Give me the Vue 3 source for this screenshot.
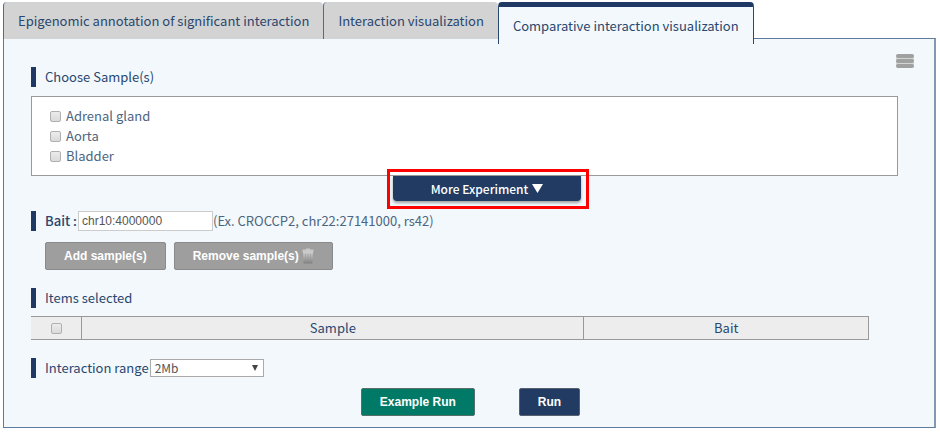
<script setup>
import { ref } from 'vue';

const tabs = [
  'Epigenomic annotation of significant interaction',
  'Interaction visualization',
  'Comparative interaction visualization',
];
const activeTab = ref(2);

const samples = ['Adrenal gland', 'Aorta', 'Bladder'];
const checked = ref([]);
const allSelected = ref(false);

const bait = ref('chr10:4000000');
const range = ref('2Mb');
const ranges = ['500Kb', '1Mb', '2Mb'];
</script>

<template>
  <main class="page">
    <nav class="tabs">
      <button
        v-for="(tab, i) in tabs"
        :key="tab"
        type="button"
        class="tab"
        :class="{ 'is-active': i === activeTab }"
        @click="activeTab = i"
      >{{ tab }}</button>
    </nav>

    <section class="panel">
      <header class="panel-head">
        <h2 class="label">Choose Sample(s)</h2>
        <button type="button" class="menu" aria-label="Menu">
          <svg width="18" height="14" viewBox="0 0 18 14">
            <rect y="1" width="18" height="12" fill="#d2d5d6" />
            <rect width="18" height="4" rx="2" fill="#a0a0a0" />
            <rect y="5" width="18" height="4" rx="2" fill="#a0a0a0" />
            <rect y="10" width="18" height="4" rx="2" fill="#a0a0a0" />
          </svg>
        </button>
      </header>

      <div class="samples">
        <label v-for="s in samples" :key="s" class="sample">
          <input v-model="checked" type="checkbox" class="check" :value="s">
          {{ s }}
        </label>
      </div>

      <div class="more-row">
        <div class="more-wrap">
          <button type="button" class="more">
            More Experiment
            <svg width="11" height="9" viewBox="0 0 11 9"><path d="M0 0h11L5.5 9z" fill="#fff" /></svg>
          </button>
        </div>
      </div>

      <div class="label bait">
        <label for="bait" class="bait-name">Bait :</label>
        <input id="bait" v-model="bait" type="text" class="bait-input">
        <span class="hint">(Ex. CROCCP2, chr22:27141000, rs42)</span>
      </div>

      <div class="actions">
        <button type="button" class="btn">Add sample(s)</button>
        <button type="button" class="btn">
          Remove sample(s)
          <!-- trash can -->
          <svg class="trash" width="12" height="16" viewBox="0 0 12 16">
            <defs>
              <linearGradient id="can" x1="0" y1="0" x2="0" y2="1">
                <stop offset="0" stop-color="#d0d0d0" />
                <stop offset="1" stop-color="#808080" />
              </linearGradient>
            </defs>
            <path d="M4 1.5V.5h4v1h3.5V4H.5V1.500z" fill="#c8c8c8" />
            <path d="M1 4h10l-.6 11.500H1.600z" fill="url(#can)" />
            <path d="M3.500 5.500l.3 8M6 5.500v8M8.500 5.500l-.3 8" stroke="#9a9a9a" stroke-width=".6" />
          </svg>
        </button>
      </div>

      <h2 class="label">Items selected</h2>
      <table class="items">
        <thead>
          <tr>
            <th class="col-check">
              <input v-model="allSelected" type="checkbox" class="check" aria-label="Select all">
            </th>
            <th class="col-sample">Sample</th>
            <th>Bait</th>
          </tr>
        </thead>
      </table>

      <div class="label">
        <label for="range">Interaction range</label>
        <span class="select">
          <select id="range" v-model="range">
            <option v-for="r in ranges" :key="r">{{ r }}</option>
          </select>
          <svg class="arrow" width="6" height="6" viewBox="0 0 6 6"><path d="M0 0h6L3 6z" fill="#444" /></svg>
        </span>
      </div>

      <div class="run-row">
        <button type="button" class="btn btn-example">Example Run</button>
        <button type="button" class="btn btn-run">Run</button>
      </div>
    </section>
  </main>
</template>

<style>
body {
  background: #fff;
}
</style>

<style scoped>
.page {
  padding: 2px 4px 7px 3px;
  font-family: "Noto Sans CJK KR", "Noto Sans", sans-serif;
  font-size: 13px;
  line-height: 20px;
  color: #29476f;
}
.page * {
  box-sizing: border-box;
}
button,
input,
select {
  margin: 0;
  font-family: inherit;
}

/* tabs: the active one hangs over the top border of the panel */
.tabs {
  position: relative;
  display: flex;
  align-items: flex-start;
  height: 36px;
}
.tab {
  height: 37px;
  padding: 0 14px;
  border: 0;
  border-left: 1px solid #4f6b91;
  border-radius: 4px 4px 0 0;
  background: #d3d3d3;
  color: #29476f;
  font-size: 13px;
  line-height: 20px;
  white-space: nowrap;
}
.tab.is-active {
  height: 42px;
  border: 1px solid #29476f;
  border-top: 5px solid #1f3864;
  border-bottom: 0;
  background: #f2f8fb;
}

.panel {
  padding: 15px 20px 11px 27px;
  border: 1px solid #5d7a9f;
  border-right: 2px solid #8398b4;
  background: #f2f8fb;
}
.panel-head {
  display: flex;
  align-items: flex-start;
  justify-content: space-between;
}
.panel-head .label {
  margin-top: 13px;
}
.menu {
  height: 14px;
  padding: 0;
  border: 0;
  background: none;
}
.menu svg {
  display: block;
}

.label {
  display: flex;
  align-items: center;
  height: 20px;
  margin: 0;
  padding-left: 9px;
  border-left: 5px solid #1f3864;
  font-size: 13px;
  font-weight: 400;
}

.samples {
  height: 80px;
  margin: 9px 16px 0 0;
  padding: 9px 18px;
  border: 1px solid #999;
  background: #fff;
}
.sample {
  display: flex;
  align-items: center;
  gap: 5px;
  color: #4d6580;
}
.check {
  appearance: none;
  width: 11px;
  height: 11px;
  border: 1px solid #b0b0b0;
  border-radius: 2px;
  background: linear-gradient(#ececec, #dadada);
}

.more-row {
  display: flex;
  justify-content: center;
  padding-left: 29px;
}
.more-wrap {
  position: relative;
}
.more-wrap::after {
  content: "";
  position: absolute;
  inset: -7px -8px -8px -6px;
  border: 3px solid #f00;
  pointer-events: none;
}
.more {
  display: flex;
  align-items: center;
  justify-content: center;
  gap: 4px;
  width: 188px;
  height: 25px;
  padding: 0;
  border: 0;
  border-radius: 0 0 4px 4px;
  background: #213b63;
  box-shadow: 0 2px 3px rgba(0, 0, 0, 0.35);
  color: #fff;
  font-size: 12px;
  font-weight: 500;
}

.bait {
  margin-top: 10px;
}
.bait-name {
  width: 33px;
  font-weight: 500;
  white-space: nowrap;
}
.bait-input {
  width: 135px;
  height: 20px;
  padding: 0 3px;
  border: 1px solid #ccc;
  background: #fff;
  color: #555;
  font-family: "Liberation Sans", Arial, sans-serif;
  font-size: 12px;
}
.hint {
  color: #4d6580;
}

.actions {
  display: flex;
  gap: 8px;
  margin: 11px 0 18px 14px;
}
.btn {
  display: flex;
  align-items: center;
  gap: 3px;
  height: 28px;
  padding: 0 18px;
  border: 1px solid #8a8a8a;
  border-radius: 2px;
  background: #9e9e9e;
  color: #fff;
  font-family: "Liberation Sans", Arial, sans-serif;
  font-size: 12px;
  font-weight: 700;
}

.items {
  width: calc(100% - 45px);
  height: 24px;
  margin: 8px 0 18px;
  border-collapse: separate;
  border-spacing: 0;
  border: 1px solid #999;
  border-left: 0;
  table-layout: fixed;
  background: #ededed;
}
.items th {
  padding: 0;
  font-weight: 400;
}
.items th + th {
  border-left: 1px solid #999;
}
.items .check {
  display: block;
  margin: 0 auto;
}
.col-check {
  width: 6%;
}
.col-sample {
  width: 60%;
}

.select {
  position: relative;
  margin-left: 1px;
}
.select,
.select select {
  display: block;
  width: 114px;
  height: 18px;
}
.select select {
  appearance: none;
  padding: 0 4px;
  border: 1px solid #aaa;
  border-radius: 0;
  background: #fff;
  color: #555;
  font-size: 12px;
  line-height: 16px;
}
.arrow {
  position: absolute;
  top: 6px;
  right: 6px;
  pointer-events: none;
}

.run-row {
  display: flex;
  justify-content: center;
  gap: 44px;
  margin-top: 10px;
  padding-right: 4px;
}
.btn-example {
  border-color: #55706a;
  background: #007a66;
}
.btn-run {
  border-color: #56606e;
  background: #213b63;
}
</style>
